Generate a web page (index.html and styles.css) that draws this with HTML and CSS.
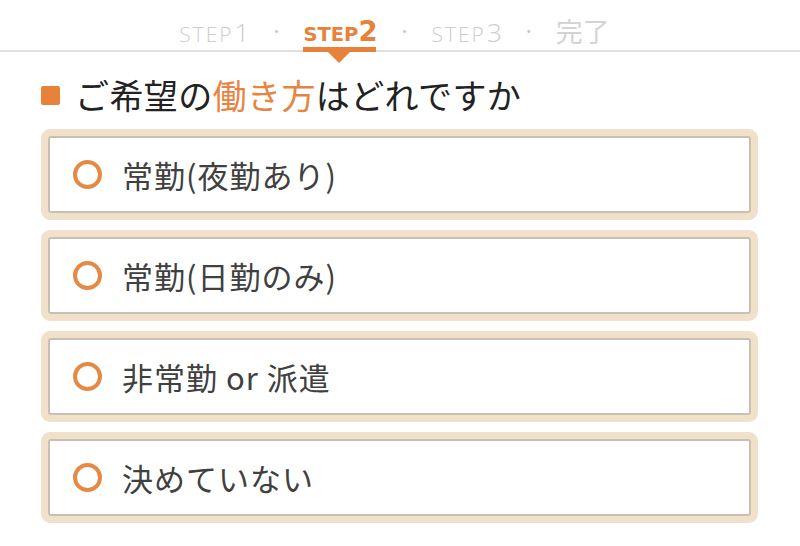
FILE: index.html
```html
<!DOCTYPE html>
<html lang="ja">
<head>
<meta charset="utf-8">
<link rel="stylesheet" href="styles.css">
</head>
<body>
<nav class="steps">
  <span class="step">STEP<span class="num">1</span></span>
  <span class="dot">・</span>
  <span class="step active">STEP<span class="num">2</span></span>
  <span class="dot">・</span>
  <span class="step">STEP<span class="num">3</span></span>
  <span class="dot">・</span>
  <span class="step done">完了</span>
</nav>
<h1 class="question"><span class="mark"></span>ご希望の<em>働き方</em>はどれですか</h1>
<ul class="options">
  <li class="option"><div class="inner"><span class="radio"></span>常勤(夜勤あり)</div></li>
  <li class="option"><div class="inner"><span class="radio"></span>常勤(日勤のみ)</div></li>
  <li class="option"><div class="inner"><span class="radio"></span>非常勤 or 派遣</div></li>
  <li class="option"><div class="inner"><span class="radio"></span>決めていない</div></li>
</ul>
</body>
</html>
```
FILE: styles.css
```css
* { box-sizing: border-box; }
body {
  margin: 0;
  background: #fff;
  font-family: "Noto Sans CJK JP", "Noto Sans", sans-serif;
  color: #333;
}
.steps {
  display: flex;
  justify-content: center;
  align-items: flex-end;
  height: 52px;
  border-bottom: 2px solid #e2e0dc;
  padding-right: 11px;
}
.step {
  position: relative;
  display: block;
  font-family: "Open Sans", "DejaVu Sans", sans-serif;
  font-weight: 300;
  font-size: 21px;
  color: #cdcdcd;
  line-height: 1;
  padding-bottom: 5px;
  letter-spacing: 2px;
}
.step .num {
  font-size: 26px;
  font-weight: 300;
  margin-left: 1px;
  letter-spacing: 0;
}
.step.active {
  font-family: "DejaVu Sans", sans-serif;
  color: #e8823a;
  font-weight: 700;
  font-size: 19.5px;
  letter-spacing: 0;
}
.step.active .num { font-weight: 700; font-size: 27.5px; margin-left: 0; }
.step.active::after {
  content: "";
  position: absolute;
  left: 0;
  right: 2px;
  bottom: -2px;
  height: 5px;
  background: #e8823a;
}
.step.active::before {
  content: "";
  position: absolute;
  left: 50%;
  bottom: -13px;
  margin-left: -12px;
  border-left: 11px solid transparent;
  border-right: 11px solid transparent;
  border-top: 11px solid #e8823a;
}
.step.done {
  font-family: "Noto Sans CJK JP", sans-serif;
  font-weight: 400;
  font-size: 27px;
  letter-spacing: 0;
  padding-bottom: 6px;
  color: #d4d4d4;
}
.dot {
  display: flex;
  justify-content: center;
  font-size: 14px;
  color: #c8c8c8;
  width: 6px;
  margin: 0 24px;
  padding-bottom: 13px;
  line-height: 1;
  white-space: nowrap;
}
.question {
  display: flex;
  align-items: center;
  margin: 22px 0 13px 41px;
  font-size: 34px;
  font-weight: 400;
  line-height: 42px;
  color: #222;
  letter-spacing: 0.4px;
}
.question em {
  font-style: normal;
  color: #e8843f;
}
.mark {
  width: 19px;
  height: 19px;
  background: #e8823a;
  border-radius: 2px;
  margin-right: 15px;
}
.options {
  list-style: none;
  margin: 0;
  padding: 0 42px 0 41px;
  display: flex;
  flex-direction: column;
  gap: 10px;
}
.option {
  height: 91px;
  border: 7px solid #f2e1ca;
  border-radius: 9px;
  background: #f2e1ca;
}
.inner {
  height: 100%;
  background: #fff;
  border: 2px solid #c9c0b4;
  border-radius: 3px;
  display: flex;
  align-items: center;
  padding-left: 23px;
  font-size: 31px;
  color: #404040;
  letter-spacing: 1px;
}
.radio {
  width: 29px;
  height: 29px;
  border: 4px solid #e58a45;
  border-radius: 50%;
  margin-right: 20px;
  flex: none;
}
```
